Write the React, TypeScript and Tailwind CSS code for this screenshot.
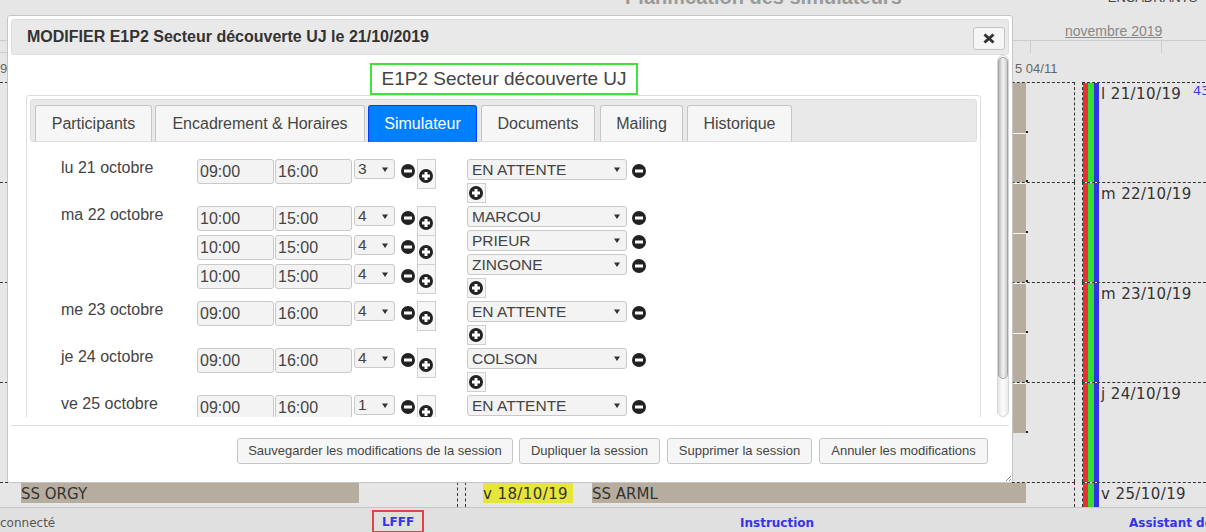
import React from "react";

const DV = "font-['DejaVu_Sans',Verdana,sans-serif]";

function MinusIcon() {
  return (
    <svg width="14" height="14" viewBox="0 0 14 14" className="block">
      <circle cx="7" cy="7" r="7" fill="#222" />
      <rect x="3" y="5.5" width="8" height="3" fill="#fff" />
    </svg>
  );
}

function PlusIcon() {
  return (
    <svg width="14" height="14" viewBox="0 0 14 14" className="block">
      <circle cx="7" cy="7" r="7" fill="#222" />
      <rect x="3" y="5.5" width="8" height="3" fill="#fff" />
      <rect x="5.5" y="3" width="3" height="8" fill="#fff" />
    </svg>
  );
}

function Caret() {
  return (
    <svg width="6" height="5" viewBox="0 0 6 5" className="block shrink-0">
      <path d="M0 0.5 H6 L3 5 Z" fill="#333" />
    </svg>
  );
}

function TimeRow({ a, b, n }: { a: string; b: string; n: string }) {
  return (
    <div className="flex h-[29px] items-start">
      <div className="h-[25px] w-[77px] rounded-[3px] border border-[#c9c9c9] bg-[#f3f3f3] pl-[2px] text-[16px] leading-[23px] text-[#444]">
        {a}
      </div>
      <div className="ml-[1px] h-[25px] w-[77px] rounded-[3px] border border-[#c9c9c9] bg-[#f3f3f3] pl-[2px] text-[16px] leading-[23px] text-[#444]">
        {b}
      </div>
      <div className="ml-[2px] flex h-[20px] w-[41px] items-center justify-between rounded-[3px] border border-[#c9c9c9] bg-[#f3f3f3] pl-[3px] pr-[6px] text-[15.5px] leading-[18px] text-[#444]">
        {n}
        <Caret />
      </div>
      <div className="ml-[6px] mt-[5px]">
        <MinusIcon />
      </div>
      <div className="ml-[2px] h-[30px] w-[19px] border border-[#cfcfcf] bg-[#f6f6f6] pl-[1px] pt-[9px]">
        <PlusIcon />
      </div>
    </div>
  );
}

function PersonRow({ name }: { name: string }) {
  return (
    <div className="flex h-[24px] items-start">
      <div className="flex h-[21px] w-[160px] items-center justify-between rounded-[3px] border border-[#c9c9c9] bg-[#f3f3f3] pl-[4px] pr-[6px] text-[15.5px] leading-[19px] text-[#444]">
        {name}
        <Caret />
      </div>
      <div className="ml-[5px] mt-[5px]">
        <MinusIcon />
      </div>
    </div>
  );
}

function PlusBox() {
  return (
    <div className="h-[20px] w-[19px] border border-[#cfcfcf] bg-[#f6f6f6] pl-[1px] pt-[2px]">
      <PlusIcon />
    </div>
  );
}

const days = [
  { label: "lu 21 octobre", times: [["09:00", "16:00", "3"]], people: ["EN ATTENTE"] },
  {
    label: "ma 22 octobre",
    times: [
      ["10:00", "15:00", "4"],
      ["10:00", "15:00", "4"],
      ["10:00", "15:00", "4"],
    ],
    people: ["MARCOU", "PRIEUR", "ZINGONE"],
  },
  { label: "me 23 octobre", times: [["09:00", "16:00", "4"]], people: ["EN ATTENTE"] },
  { label: "je 24 octobre", times: [["09:00", "16:00", "4"]], people: ["COLSON"] },
  { label: "ve 25 octobre", times: [["09:00", "16:00", "1"]], people: ["EN ATTENTE"] },
];

function Tab({ label, cls, active }: { label: string; cls: string; active?: boolean }) {
  return (
    <div
      className={`${cls} flex items-center justify-center rounded-t-[3px] border border-b-0 text-[16px] ${
        active
          ? "h-[37px] border-[#003eff] bg-[#007fff] text-white"
          : "h-[36px] border-[#c5c5c5] bg-[#f6f6f6] text-[#454545]"
      }`}
    >
      {label}
    </div>
  );
}

function Dialog() {
  return (
    <div className="absolute left-[7px] top-[15px] z-10 flex h-[468px] w-[1006px] flex-col rounded-[3px] border border-[#c5c5c5] bg-white p-[3px]">
      {/* title bar */}
      <div className="flex h-[36px] shrink-0 items-center justify-between rounded-[3px] border border-[#dddddd] bg-[#e9e9e9] pl-[15px] pr-[3px]">
        <span className="text-[16px] font-bold text-[#333]">MODIFIER E1P2 Secteur découverte UJ le 21/10/2019</span>
        <div className="mt-[2px] flex h-[23px] w-[32px] items-center justify-center rounded-[3px] border border-[#c5c5c5] bg-[#f6f6f6]">
          <svg width="12" height="11" viewBox="0 0 12 11">
            <path d="M1.5 1.5 L10.5 9.5 M10.5 1.5 L1.5 9.5" stroke="#333" strokeWidth="3" />
          </svg>
        </div>
      </div>

      {/* content */}
      <div className="flex h-[362px] shrink-0 overflow-hidden">
        <div className="flex-1 overflow-hidden pt-[8px]">
          <div className="mx-auto flex h-[32px] w-fit items-center border-2 border-[#3ee43e] px-[9px] text-[19px] text-[#444]">
            E1P2 Secteur découverte UJ
          </div>
          <div className="ml-[15px] w-[955px] rounded-[3px] border border-[#dddddd] p-[3px]">
            <div className="flex h-[43px] items-start rounded-[3px] border border-[#dddddd] bg-[#e9e9e9] pl-[4px] pt-[5px]">
              <Tab label="Participants" cls="w-[117px]" />
              <Tab label="Encadrement & Horaires" cls="ml-[3px] w-[210px]" />
              <Tab label="Simulateur" cls="ml-[3px] w-[109px]" active />
              <Tab label="Documents" cls="ml-[4px] w-[114px]" />
              <Tab label="Mailing" cls="ml-[5px] w-[83px]" />
              <Tab label="Historique" cls="ml-[4px] w-[105px]" />
            </div>
            <div className="pl-[31px] pt-[17px]">
              {days.map((d) => (
                <div key={d.label} className="mb-[3px] flex items-start">
                  <div className="w-[136px] text-[16px] leading-[18px] text-[#444]">{d.label}</div>
                  <div className="w-[270px]">
                    {d.times.map((t, i) => (
                      <TimeRow key={i} a={t[0]} b={t[1]} n={t[2]} />
                    ))}
                  </div>
                  <div>
                    {d.people.map((p) => (
                      <PersonRow key={p} name={p} />
                    ))}
                    <PlusBox />
                  </div>
                </div>
              ))}
            </div>
          </div>
        </div>
        {/* scrollbar */}
        <div className="h-full w-[12px] shrink-0 rounded-[6px] border border-[#d6d6d6] bg-linear-to-r from-[#e6e6e6] via-[#fdfdfd] to-[#e9e9e9]">
          <div className="mt-[1px] h-[322px] rounded-[6px] border border-[#a4a4a4] bg-linear-to-r from-[#bdbdbd] via-[#f3f3f3] to-[#cdcdcd]" />
        </div>
      </div>

      {/* button pane */}
      <div className="mt-[8px] flex flex-1 items-start justify-end border-t border-[#dddddd] pr-[21px] pt-[12px]">
        {[
          ["Sauvegarder les modifications de la session", "w-[276px]"],
          ["Dupliquer la session", "ml-[6px] w-[141px]"],
          ["Supprimer la session", "ml-[7px] w-[145px]"],
          ["Annuler les modifications", "ml-[7px] w-[169px]"],
        ].map(([t, c]) => (
          <div
            key={t}
            className={`${c} flex h-[26px] items-center justify-center whitespace-nowrap rounded-[3px] border border-[#c5c5c5] bg-[#f6f6f6] text-[13px] text-[#454545]`}
          >
            {t}
          </div>
        ))}
      </div>

      {/* resize handle */}
      <svg width="6" height="6" viewBox="0 0 6 6" className="absolute bottom-[1px] right-[1px]">
        <path d="M6 1 L1 6 M6 4 L4 6" stroke="#888" strokeWidth="1" />
      </svg>
    </div>
  );
}

const DASH = "border-dashed border-[#333]";
const TAN = "bg-[#b7ad9f]";

function Seg({ cls }: { cls: string }) {
  return (
    <div className={`flex ${cls}`}>
      <div className={`w-[434px] ${TAN}`} />
      <div className="flex flex-col justify-end">
        <div className="h-[2px] w-[2px] bg-[#222]" />
      </div>
    </div>
  );
}

function WhiteLine() {
  return <div className="h-px w-[434px] bg-[#f4f4f4]" />;
}

function Stripes() {
  return (
    <>
      <div className="w-[5px] shrink-0 bg-[#e63232]" />
      <div className="w-[6px] shrink-0 bg-[#33dd33]" />
      <div className="w-[5px] shrink-0 bg-[#3232e6]" />
    </>
  );
}

function Row({
  h,
  c0,
  c1,
  c2,
}: {
  h: string;
  c0?: React.ReactNode;
  c1?: React.ReactNode;
  c2?: React.ReactNode;
}) {
  return (
    <div className={`flex shrink-0 ${h}`}>
      <div className={`flex w-[458px] shrink-0 border-r border-t ${DASH}`}>{c0}</div>
      <div className="w-[7px] shrink-0" />
      <div className={`flex w-[610px] shrink-0 border-l border-r border-t ${DASH}`}>{c1}</div>
      <div className="w-[7px] shrink-0" />
      <div className={`flex flex-1 border-l border-t ${DASH}`}>{c2}</div>
    </div>
  );
}

function DateLabel({ text }: { text: string }) {
  return (
    <div
      className={`ml-[2px] w-[92px] shrink-0 whitespace-nowrap pt-[3px] text-[15px] leading-[17.5px] tracking-[0.4px] text-[#333] ${DV}`}
    >
      {text}
    </div>
  );
}

function Background() {
  const tanCols = [
    <div className="flex flex-col" key="r1">
      <Seg cls="h-[50px]" />
      <WhiteLine />
      <Seg cls="flex-1" />
    </div>,
    <div className="flex flex-col" key="r2">
      <WhiteLine />
      <Seg cls="h-[49px]" />
      <WhiteLine />
      <Seg cls="flex-1" />
    </div>,
    <div className="flex flex-col" key="r3">
      <WhiteLine />
      <Seg cls="h-[49px]" />
      <WhiteLine />
      <Seg cls="flex-1" />
    </div>,
    <div className="flex flex-col" key="r4">
      <WhiteLine />
      <Seg cls="h-[49px]" />
    </div>,
  ];
  const dates = ["l 21/10/19", "m 22/10/19", "m 23/10/19", "j 24/10/19"];

  return (
    <div className="flex h-full flex-col">
      {/* header */}
      <div className="flex h-[15px] shrink-0 whitespace-nowrap">
        <div className="ml-[625px] -mt-[14px] h-[23px] text-[20px] font-bold leading-[23px] text-[#9a9a9a]">
          Planification des simulateurs
        </div>
        <div className="ml-[206px] -mt-[10px] h-[15px] text-[13px] leading-[15px] text-[#444]">ENCADRANTS</div>
      </div>
      {/* month row */}
      <div className="flex h-[26px] shrink-0 border-b border-[#cccccc]">
        <div className="ml-[1065px] pt-[8px] text-[14px] leading-[16px] text-[#888] underline">novembre 2019</div>
      </div>
      {/* week row */}
      <div className="flex h-[12px] shrink-0">
        <div className="w-[7px] border-b border-[#cccccc]" />
        <div className="ml-[1023px] w-px bg-[#cccccc]" />
        <div className="ml-[130px] w-px bg-[#cccccc]" />
      </div>
      {/* day header */}
      <div className="flex h-[29px] shrink-0 pt-[8px] text-[13px] leading-[15px] text-[#666]">
        <div className="w-[1015px]">9</div>
        <div>5 04/11</div>
      </div>
      {/* rows */}
      {dates.map((d, i) => (
        <Row
          key={d}
          h="h-[100px]"
          c1={
            <>
              <div className="w-[126px] shrink-0" />
              {tanCols[i]}
            </>
          }
          c2={
            <>
              <Stripes />
              <DateLabel text={d} />
              {i === 0 && <div className={`text-[13px] leading-[15px] text-[#3a3ae8] ${DV}`}>43</div>}
            </>
          }
        />
      ))}
      <Row
        h="h-[25px]"
        c0={
          <div className={`ml-[21px] h-[20px] w-[338px] pt-[3px] text-[15px] leading-[17px] text-[#333] ${TAN} ${DV}`}>
            SS ORGY
          </div>
        }
        c1={
          <>
            <div
              className={`ml-[17px] h-[20px] w-[90px] shrink-0 bg-[#e6e63a] pt-[3px] text-[15px] leading-[17px] tracking-[0.4px] text-[#333] ${DV}`}
            >
              v 18/10/19
            </div>
            <div className={`ml-[19px] h-[20px] w-[434px] shrink-0 pt-[3px] text-[15px] leading-[17px] text-[#333] ${TAN} ${DV}`}>
              SS ARML
            </div>
          </>
        }
        c2={
          <>
            <Stripes />
            <DateLabel text="v 25/10/19" />
          </>
        }
      />
      {/* footer */}
      <div className={`flex h-[25px] shrink-0 items-start border-t border-[#c4c4c4] bg-[#e0e0e0] text-[12px] leading-[14px] ${DV}`}>
        <div className="w-[372px] shrink-0 pt-[8px] text-[#555]">connecté</div>
        <div className="mt-[2px] flex h-[23px] w-[52px] shrink-0 justify-center border-2 border-[#e04444] pt-[3px] font-bold text-[#3535e8]">
          LFFF
        </div>
        <div className="ml-[316px] w-[389px] shrink-0 pt-[8px] font-bold text-[#3535e8]">Instruction</div>
        <div className="shrink-0 whitespace-nowrap pt-[8px] font-bold text-[#3535e8]">Assistant de</div>
      </div>
    </div>
  );
}

export default function App() {
  return (
    <div className="relative h-[532px] w-[1206px] overflow-hidden bg-[#e6e6e6] font-['Liberation_Sans',Arial,sans-serif]">
      <Background />
      <Dialog />
    </div>
  );
}
